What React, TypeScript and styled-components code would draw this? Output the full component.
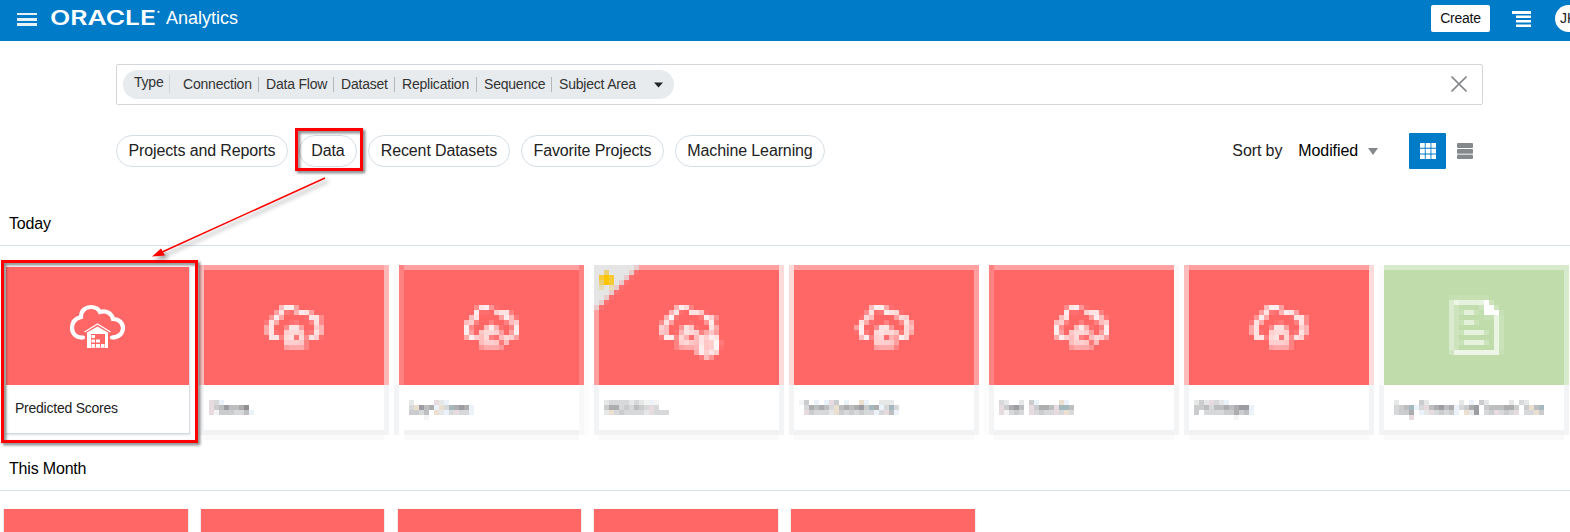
import React from "react";
import styled, { createGlobalStyle } from "styled-components";

const GlobalStyle = createGlobalStyle`
  html, body { margin: 0; padding: 0; background: #fff; }
  body { overflow: hidden; font-family: "Liberation Sans", Arial, sans-serif; color: #222; }
  * { box-sizing: border-box; }
  svg { display: block; flex: none; }
`;

const Page = styled.div`
  position: relative;
  width: 1570px;
  height: 532px;
  overflow: hidden;
  background: #fff;
`;

const TopBar = styled.header`
  display: flex;
  align-items: flex-start;
  height: 41px;
  padding: 5px 0 0 17px;
  background: #007bc8;
`;

const MenuIcon = styled.svg`
  margin-top: 8px;
`;

const Brand = styled.svg`
  margin-left: 13px;
  overflow: visible;
`;

const Product = styled.span`
  margin-left: 5px;
  color: #fff;
  font-size: 18px;
  line-height: 26px;
`;

const CreateButton = styled.button`
  flex: none;
  width: 59px;
  height: 27px;
  margin-left: auto;
  padding: 0 0 1px;
  border: 0;
  border-radius: 2px;
  background: #fff;
  color: #111;
  font: 14px "Liberation Sans", Arial, sans-serif;
  letter-spacing: -0.25px;
`;

const ListIcon = styled.svg`
  margin: 6px 24px 0 22px;
`;

const Avatar = styled.div`
  flex: none;
  width: 27px;
  height: 27px;
  margin-right: -12px;
  padding-left: 5px;
  border-radius: 50%;
  background: #fff;
  color: #222;
  font-size: 14px;
  line-height: 26px;
`;

const SearchBox = styled.div`
  display: flex;
  align-items: center;
  justify-content: space-between;
  width: 1367px;
  height: 41px;
  margin: 23px 0 0 116px;
  padding: 0 15px 0 6px;
  border: 1px solid #d4d6d8;
  border-radius: 2px;
`;

const ClearIcon = styled.svg`
  margin-bottom: 1px;
`;

const FilterPill = styled.div`
  display: flex;
  align-items: center;
  width: 551px;
  height: 29px;
  padding-left: 11px;
  border-radius: 15px;
  background: #e7ebee;
  color: #333;
  font-size: 14px;
  letter-spacing: -0.21px;
  white-space: nowrap;
`;

const FilterName = styled.span`
  width: 36px;
  height: 18px;
  margin: -2px 6px 0 0;
  border-right: 1px solid #d3d7da;
  line-height: 14px;
`;

const FilterValue = styled.span<{ $w: number; $last?: boolean }>`
  width: ${(p) => p.$w}px;
  height: 15px;
  padding-left: 7px;
  border-right: 1px solid ${(p) => (p.$last ? "transparent" : "#b4b8bb")};
  line-height: 14px;
`;

const Toolbar = styled.div`
  display: flex;
  align-items: flex-start;
  height: 36px;
  margin: 28px 87px 0 116px;
  font-size: 16px;
`;

const Chip = styled.button<{ $w: number }>`
  flex: none;
  width: ${(p) => p.$w}px;
  height: 32px;
  margin: 2px 11px 0 0;
  padding: 0 0 1px;
  border: 1px solid #d5dee6;
  border-radius: 16px;
  background: #fff;
  color: #222;
  font: 16px "Liberation Sans", Arial, sans-serif;
  letter-spacing: -0.12px;
  white-space: nowrap;
`;

const Sort = styled.div`
  display: flex;
  align-items: center;
  height: 35px;
  margin-left: auto;
  letter-spacing: -0.1px;
`;

const SortValue = styled.span`
  margin: 0 10px 0 16px;
  color: #000;
`;

const SortArrow = styled.svg`
  margin-top: 2px;
`;

const ViewButton = styled.div<{ $active?: boolean }>`
  display: grid;
  place-items: center;
  width: 37px;
  height: 36px;
  border-radius: 1px;
  background: ${(p) => (p.$active ? "#007bc8" : "transparent")};
`;

const SectionTitle = styled.h2<{ $top: number }>`
  height: 33px;
  margin: ${(p) => p.$top}px 0 0;
  padding: 1px 0 0 9px;
  border-bottom: 1px solid #d5dfe7;
  color: #000;
  font-size: 16px;
  font-weight: 400;
  line-height: 20px;
  letter-spacing: -0.18px;
`;

const CardRow = styled.div`
  display: flex;
  gap: 5px;
  height: 175px;
  margin-top: 19px;
`;

const DatasetCard = styled.article`
  flex: none;
  width: 184px;
  height: 167px;
  margin: 2px 4px 0 6px;
  border-right: 1px solid #d9dfe4;
  border-bottom: 1px solid #d2dae1;
  box-shadow: 0 1px 2px #0002;
`;

const DatasetArt = styled.div`
  height: 118px;
  padding: 37px 0 0 63px;
  background: #ff6666;
`;

const DatasetName = styled.div`
  padding: 15px 0 0 9px;
  color: #222;
  font-size: 14px;
  line-height: 16px;
  letter-spacing: -0.24px;
`;

const MaskedCard = styled.article`
  position: relative;
  display: flex;
  flex: none;
`;

const Edge = styled.div<{ $top: string; $foot: string }>`
  width: 5px;
  height: 170px;
  background: linear-gradient(${(p) => p.$top} 120px, ${(p) => p.$foot} 120px);
`;

const MaskedBody = styled.div<{ $w: number }>`
  width: ${(p) => p.$w}px;
`;

const MaskedArt = styled.div<{ $fill: string; $light: string }>`
  height: 120px;
  border-top: 5px solid ${(p) => p.$light};
  background: ${(p) => p.$fill};
`;

const MaskedFoot = styled.div`
  height: 55px;
  border-bottom: 5px solid #fafafa;
  background: linear-gradient(#fff 45px, #f0f2f4 45px);
`;

const Inset = styled.div<{ $x: number; $y: number }>`
  padding: ${(p) => p.$y}px 0 0 ${(p) => p.$x}px;
`;

const Corner = styled.svg`
  position: absolute;
  top: 0;
  left: 0;
`;

const NextRow = styled.div`
  display: flex;
  gap: 13.25px;
  margin: 18px 0 0 4px;
`;

const NextCard = styled.div`
  width: 183.5px;
  height: 30px;
  background: #ff6666;
  box-shadow: -1px 0 1px #0001, 1px 0 1px #0001;
`;

const Highlight = styled.div<{ $x: number; $y: number; $w: number; $h: number }>`
  position: absolute;
  left: ${(p) => p.$x}px;
  top: ${(p) => p.$y}px;
  width: ${(p) => p.$w}px;
  height: ${(p) => p.$h}px;
  border: 3px solid #f00;
  filter: drop-shadow(2px 2px 1.5px rgba(0, 0, 0, 0.55));
`;

const Arrow = styled.svg`
  position: absolute;
  left: 140px;
  top: 165px;
  filter: drop-shadow(3px 3px 2px rgba(0, 0, 0, 0.4));
`;

const CELL = 5;

const inks: Record<string, string> = {
  "1": "#f4f4f4", "2": "#e6e7e7", "3": "#d7d8d9", "4": "#cbccce",
  "5": "#bdbebf", "6": "#adacae", "7": "#9c9da3", "8": "#928e90",
  p: "#e8dbe0", b: "#ecf2fa", t: "#a4b8be", y: "#ebdfd0",
};

const whiteInk = (c: string) => {
  const n = parseInt(c, 16);
  return n ? `rgba(255,255,255,${(n / 16).toFixed(2)})` : undefined;
};
const fileInk = (c: string) => {
  if (c === "f") return "#fff";
  const n = parseInt(c, 16);
  return n ? `rgba(255,255,255,${(n / 18).toFixed(2)})` : undefined;
};
const labelInk = (c: string) => inks[c];

// Draws a coarse mosaic, one character for each 5px cell.
function Mosaic({ rows, ink }: { rows: string[]; ink: (c: string) => string | undefined }) {
  const cols = Math.max(...rows.map((r) => r.length));
  return (
    <svg width={cols * CELL} height={rows.length * CELL} shapeRendering="crispEdges">
      {rows.flatMap((row, y) =>
        [...row].map((c, x) => {
          const fill = ink(c);
          return fill ? (
            <rect key={`${x}-${y}`} x={x * CELL} y={y * CELL} width={CELL} height={CELL} fill={fill} />
          ) : null;
        })
      )}
    </svg>
  );
}

const cloudA = [
  "0009ee600000", "006d218ed600", "05e700001dd4", "2d70012003d4",
  "7d004dd600b8", "7d10bccb12d8", "0dd3cd2c4db1", "0000bbba3000", "000067773000",
];
const cloudB = [
  "004de510000", "00e110bdd30", "09d00006e92", "9b30030039b", "e4009e8103e",
  "e60accb606e", "7eb9c319cb6", "0009bba2900", "00057775000",
];
const cloudC = [
  "0009ee710000", "004d12edc100", "01c900006cb0", "0d71003004d7", "6e004dd500c9",
  "1e20cdcca2c7", "09e3bc186ec0", "0000bbba6000", "000067773000",
];
const cloudBadge = [
  "0008ec300000", "008d10dda100", "08f200002eb4", "4d60001005e2", "b9005da100d7",
  "a9018dcb37a6", "2ee4c819dbed", "0003bca9dabf2", "00036778eabf1", "00000007ebdb",
  "00000000295",
];
const documentIcon = [
  "22222222", "8dbbbbcf4", "8411114ff4", "843aa31fff2", "840000122c3", "843aa3000c3",
  "840000000c3", "843bbbb40c3", "840000000c3", "843bbbb40c3", "840000000c3", "5ddddddddd2",
];

const starCorner = [
  "ggggggggp", "ggsggggpr", "gSFSggpr", "gsFSgpr", "gngnpr", "gggpr", "ggpr", "gpr", "pr",
];
const cornerInks: Record<string, string> = {
  g: "#e5e5e5", p: "#e8cccc", r: "#ff7070", s: "#e8cf70", S: "#f7ca38", F: "#ffc600", n: "#e8dcb4",
};
const cornerInk = (c: string) => cornerInks[c];

type Strip = [string, string];
type Masked = {
  left: Strip[];
  right: Strip[];
  icon: string[];
  label: string[];
  width?: number;
  green?: boolean;
  starred?: boolean;
};

const none = "#fcfcfc";
const side = "#f3f4f6";

const maskedCards: Masked[] = [
  {
    left: [["#fbbcbc", side]], right: [["#ffb8b8", side]], icon: cloudA,
    label: ["p3b......", "p4575568.", "p1444335b"],
  },
  {
    left: [["#fafafa", side], ["#ff8282", "#fff"]], right: [["#ff8282", "#f8f8f9"], [none, none]], icon: cloudB,
    width: 175,
    label: ["2....p2b.....", "3y756by3t676b", "4435.y2b3p33b", "...1........."],
  },
  {
    left: [["#ff9f9f", side]], right: [["#fbdada", side]], icon: cloudBadge, starred: true,
    label: ["233332321b1..", "466343543p3..", "2y3433332p333"],
  },
  {
    left: [["#fbdada", side]], right: [["#ff9f9f", side]], icon: cloudC,
    label: ["14.b.bp4.b..yb..222.", ".365653y565674t6b3t3", ".p43332y4343433b3p5b"],
  },
  {
    left: [[none, none], ["#ff8282", side]], right: [["#fdf8f8", side]], icon: cloudB,
    label: ["32..2.4b....yb.", "p4675.p4665ptt5", "p1343.p3433p3y3"],
  },
  {
    left: [["#fbbcbc", side]], right: [["#fbdada", side]], icon: cloudA,
    label: ["242p32b.....", "44535565677b", "4.333344645b", "........1..."],
  },
  {
    left: [["#fbfbfb", side]], right: [["#d8eacc", side]], icon: documentIcon, green: true,
    label: ["2....42......2.b.42....2.32...", "345tb3p56756b3467.4555664.4y5t", "3446.b2p3434b.y27.34p343p.33y4", "...p"],
  },
];

function MaskedDataset({ card }: { card: Masked }) {
  return (
    <MaskedCard>
      {card.left.map(([top, foot], i) => <Edge key={i} $top={top} $foot={foot} />)}
      <MaskedBody $w={card.width ?? 180}>
        <MaskedArt $fill={card.green ? "#bfdcaa" : "#ff6666"} $light={card.green ? "#d8eacc" : "#ffa0a0"}>
          <Inset $x={card.green ? 65 : 60} $y={card.green ? 25 : 35}>
            <Mosaic rows={card.icon} ink={card.green ? fileInk : whiteInk} />
          </Inset>
        </MaskedArt>
        <MaskedFoot>
          <Inset $x={card.green ? 10 : 5} $y={15}>
            <Mosaic rows={card.label} ink={labelInk} />
          </Inset>
        </MaskedFoot>
      </MaskedBody>
      {card.right.map(([top, foot], i) => <Edge key={i} $top={top} $foot={foot} />)}
      {card.starred && (
        <Corner width={45} height={45}>
          <Mosaic rows={starCorner} ink={cornerInk} />
        </Corner>
      )}
    </MaskedCard>
  );
}

const filters: [string, number][] = [
  ["Connection", 83], ["Data Flow", 75], ["Dataset", 61], ["Replication", 82], ["Sequence", 75], ["Subject Area", 102],
];

const chips: [string, number][] = [
  ["Projects and Reports", 172], ["Data", 58], ["Recent Datasets", 142], ["Favorite Projects", 143], ["Machine Learning", 150],
];

export default function App() {
  return (
    <Page>
      <GlobalStyle />
      <TopBar>
        <MenuIcon width="20" height="14" fill="#e6f1f9">
          <rect width="20" height="2" />
          <rect y="5" width="20" height="3" />
          <rect y="10" width="20" height="3" />
        </MenuIcon>
        <Brand width="111" height="28" fill="#fff">
          <text x="0" y="19.5" fontSize="19.5" fontWeight="600" fontFamily="Inter, sans-serif" textLength="106" lengthAdjust="spacingAndGlyphs">ORACLE</text>
          <circle cx="108.5" cy="6.8" r="1.1" />
        </Brand>
        <Product>Analytics</Product>
        <CreateButton>Create</CreateButton>
        <ListIcon width="19" height="17" fill="#fff">
          <rect width="19" height="3" />
          <rect x="4" y="4.5" width="15" height="2.5" />
          <rect x="4" y="9" width="15" height="2.5" />
          <rect x="4" y="13.5" width="15" height="2.5" />
        </ListIcon>
        <Avatar>JK</Avatar>
      </TopBar>

      <SearchBox>
        <FilterPill>
          <FilterName>Type</FilterName>
          {filters.map(([name, w], i) => (
            <FilterValue key={name} $w={w} $last={i === filters.length - 1}>{name}</FilterValue>
          ))}
          <svg width="9" height="6"><path d="M0 0.5h9L4.5 5.5z" fill="#222" /></svg>
        </FilterPill>
        <ClearIcon width="16" height="16" stroke="#85898c" strokeWidth="1.6"><path d="M.5.5l15 15M15.5.5l-15 15" /></ClearIcon>
      </SearchBox>

      <Toolbar>
        {chips.map(([name, w]) => <Chip key={name} $w={w}>{name}</Chip>)}
        <Sort>
          <span>Sort by</span>
          <SortValue>Modified</SortValue>
          <SortArrow width="41" height="7"><path d="M0 0h10L5 7z" fill="#85898c" /></SortArrow>
        </Sort>
        <ViewButton $active>
          <svg width="16" height="16" fill="#fff">
            {[0, 5.7, 11.4].flatMap((y) => [0, 5.7, 11.4].map((x) => (
              <rect key={`${x}-${y}`} x={x} y={y} width="4.8" height="4.8" rx=".5" />
            )))}
          </svg>
        </ViewButton>
        <ViewButton>
          <svg width="16" height="16" fill="#85898c">
            <rect y="10" width="16" height="2" opacity=".4" />
            <rect width="16" height="5" rx="1" />
            <rect y="6" width="16" height="4.5" rx="1" />
            <rect y="12" width="16" height="4" rx="1" />
          </svg>
        </ViewButton>
      </Toolbar>

      <SectionTitle $top={44}>Today</SectionTitle>
      <CardRow>
        <DatasetCard>
          <DatasetArt>
            <svg width="58" height="46" fill="none">
              <path d="M14 33.5C6 34 3 28.5 3 24C3 17 8 14 12 13C12 6 17 3 22 3C27 3 30 6 31 8C38 6 43 10 44 15C50 15 54 19 54 24C54 29 50 33.5 43 33.5" stroke="#fff" strokeWidth="4.2" strokeLinecap="round" />
              <path d="M15.5 28L28.5 20L41.5 28" stroke="#fff" strokeWidth="1.3" />
              <path d="M18 28.5L28.5 22.5L39 28.5V44H18z" fill="#fff" />
              <path d="M22 30h14v13.5H22z" fill="#ff6666" />
              <path d="M22.5 31h3.5v3h-3.5zM22.5 35.5h3.5v3h-3.5zM27 35.5h4v3h-4zM22.5 40h3.5v3.5h-3.5zM27 40h4v3.5h-4zM32 40h3.5v3.5h-3.5z" fill="#fff" />
            </svg>
          </DatasetArt>
          <DatasetName>Predicted Scores</DatasetName>
        </DatasetCard>
        {maskedCards.map((card, i) => <MaskedDataset key={i} card={card} />)}
      </CardRow>

      <SectionTitle $top={18}>This Month</SectionTitle>
      <NextRow>
        {[0, 1, 2, 3, 4].map((i) => <NextCard key={i} />)}
      </NextRow>

      <Highlight $x={295} $y={128} $w={68} $h={43} />
      <Highlight $x={1} $y={260} $w={197} $h={183} />
      <Arrow width="200" height="105" viewBox="140 165 200 105">
        <path d="M325 178L160 253" stroke="#f00" strokeWidth="1.5" />
        <path d="M152 256.5L161 248.5L165 255.5z" fill="#f00" />
      </Arrow>
    </Page>
  );
}
